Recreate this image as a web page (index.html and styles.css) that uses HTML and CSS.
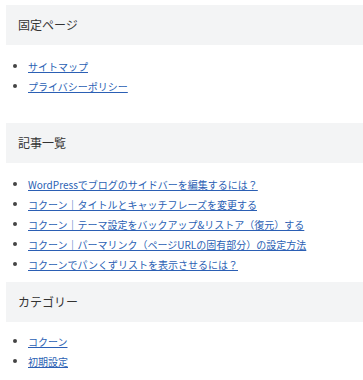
FILE: index.html
```html
<!DOCTYPE html>
<html lang="ja">
<head>
  <meta charset="UTF-8" />
  <meta name="viewport" content="width=device-width, initial-scale=1.0"/>
  <title>サイドバー</title>
  <link rel="stylesheet" href="styles.css">
</head>
<body>
  <aside class="sidebar">
    <section class="widget widget-pages">
      <h3 class="widget-title">固定ページ</h3>
      <ul class="widget-list">
        <li><a href="#">サイトマップ</a></li>
        <li><a href="#">プライバシーポリシー</a></li>
      </ul>
    </section>

    <section class="widget widget-posts">
      <h3 class="widget-title">記事一覧</h3>
      <ul class="widget-list">
        <li><a href="#">WordPressでブログのサイドバーを編集するには？</a></li>
        <li><a href="#">コクーン｜タイトルとキャッチフレーズを変更する</a></li>
        <li><a href="#">コクーン｜テーマ設定をバックアップ&amp;リストア（復元）する</a></li>
        <li><a href="#">コクーン｜パーマリンク（ページURLの固有部分）の設定方法</a></li>
        <li><a href="#">コクーンでパンくずリストを表示させるには？</a></li>
      </ul>
    </section>

    <section class="widget widget-categories">
      <h3 class="widget-title">カテゴリー</h3>
      <ul class="widget-list">
        <li><a href="#">コクーン</a></li>
        <li><a href="#">初期設定</a></li>
      </ul>
    </section>
  </aside>
</body>
</html>
```

FILE: styles.css
```css
* {
  margin: 0;
  padding: 0;
  box-sizing: border-box;
}

body {
  font-family: 'Noto Sans CJK JP', 'Noto Sans', sans-serif;
  background: #ffffff;
  color: #333333;
}

.sidebar {
  padding: 5px 0 0 6px;
}

.widget-pages {
  margin-bottom: 27px;
}

.widget-posts {
  margin-bottom: 8px;
}

.widget-title {
  background: #f3f4f5;
  height: 40px;
  line-height: 40px;
  padding: 0 12px;
  font-size: 12px;
  font-weight: 400;
  color: #333333;
}

.widget-list {
  list-style: none;
  margin-top: 11px;
}

.widget-categories .widget-list {
  margin-top: 9px;
}

/* Bullets */
.widget-list li {
  display: flex;
  align-items: center;
  height: 20px;
  font-size: 10px;
  white-space: nowrap;
}

.widget-list li::before {
  content: '';
  flex: none;
  width: 4px;
  height: 4px;
  border-radius: 50%;
  background: #444444;
  margin: 0 11px 0 7px;
}

.widget-list a {
  color: #2b5fb4;
  text-decoration: underline;
}
```
